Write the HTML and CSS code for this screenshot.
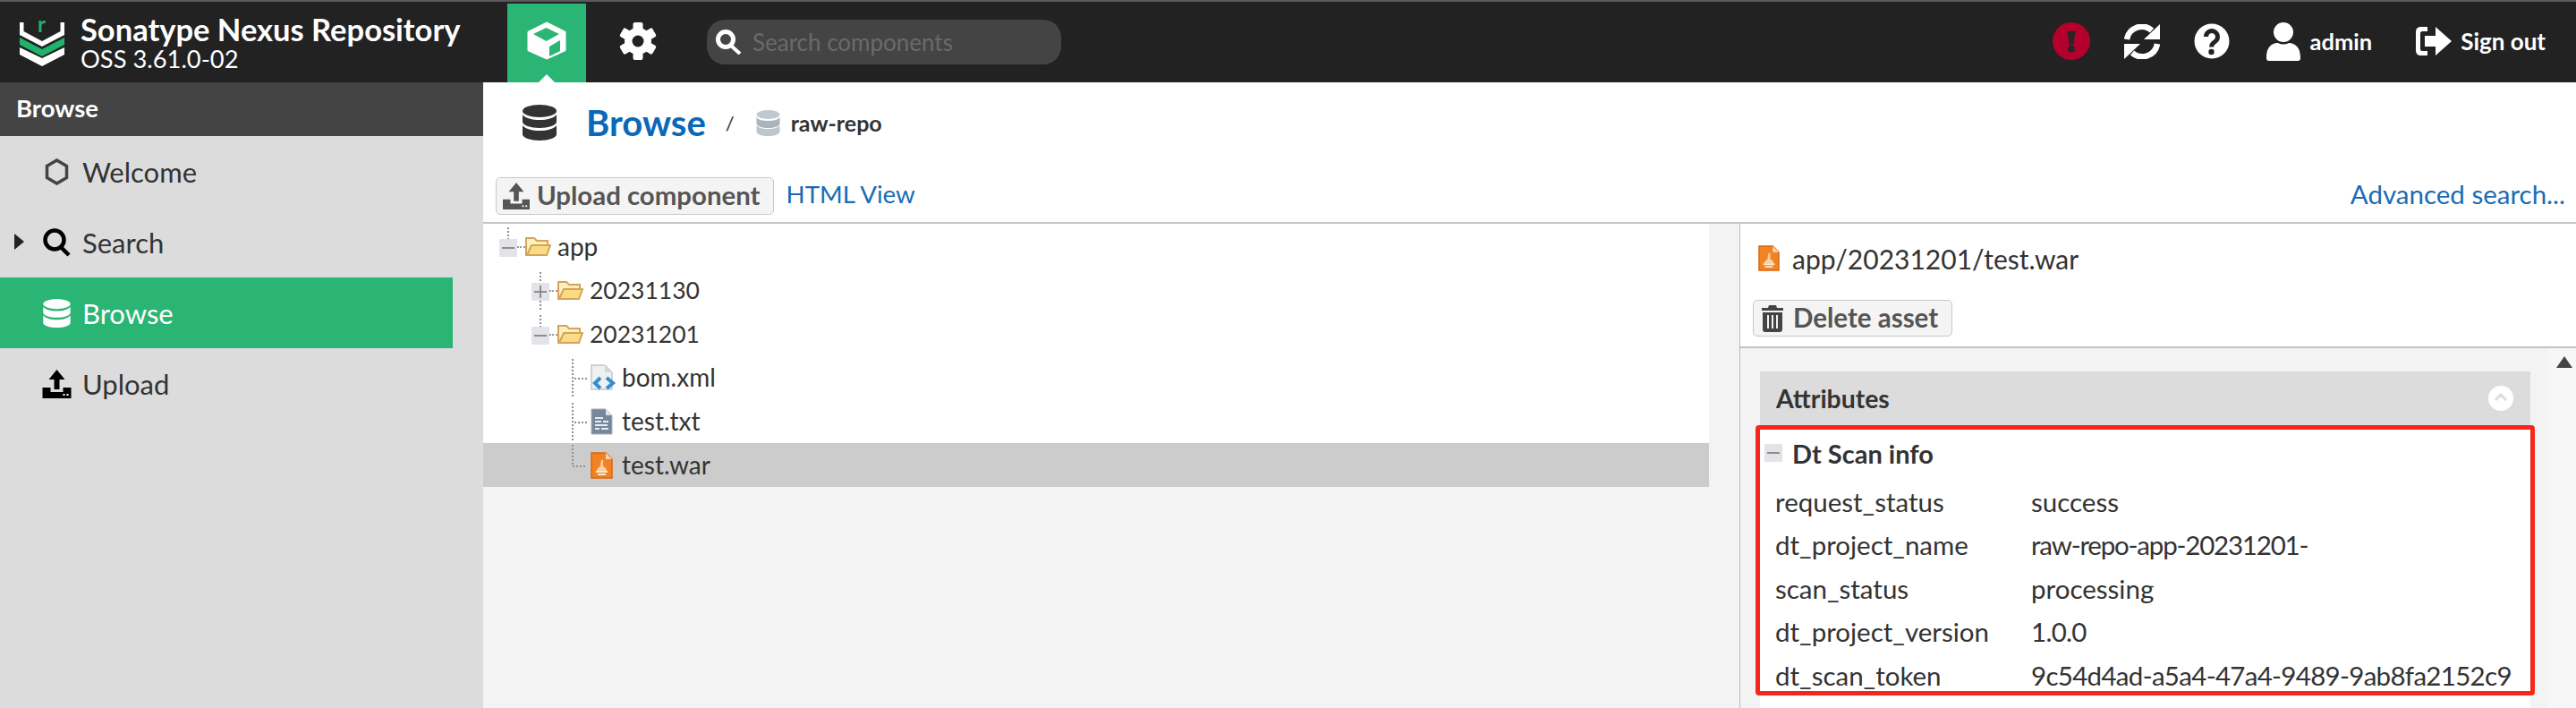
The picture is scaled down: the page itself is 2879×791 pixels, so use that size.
FILE: index.html
```html
<!DOCTYPE html>
<html lang="en">
<head>
  <meta charset="UTF-8" />
  <title>Browse - Nexus Repository Manager</title>
  <link rel="stylesheet" href="styles.css">
</head>
<body>
  <svg class="defs" width="0" height="0">
    <defs>
      <symbol id="db" viewBox="0 0 38 40">
        <ellipse cx="19" cy="7" rx="19" ry="7"/>
        <path d="M0 11c3 4 11 6 19 6s16-2 19-6v8c0 4-9 7-19 7S0 23 0 19z"/>
        <path d="M0 23c3 4 11 6 19 6s16-2 19-6v10c0 4-9 7-19 7S0 37 0 33z"/>
      </symbol>
      <symbol id="upload" viewBox="0 0 32 32">
        <path d="M16 0l9 11h-6v11h-6V11H7z"/>
        <path d="M0 20h9v5h14v-5h9v12H0z"/>
        <rect x="23" y="27" width="2" height="2" fill="#fff"/>
        <rect x="27" y="27" width="2" height="2" fill="#fff"/>
      </symbol>
      <symbol id="folder" viewBox="0 0 29 24">
        <path d="M1 22V3h9l3 3h12v5H8L2 22z" fill="#fdf0bd" stroke="#d6a35a" stroke-width="2"/>
        <path d="M2 22l5-11h21l-4 11z" fill="#fadc85" stroke="#d6a35a" stroke-width="2"/>
      </symbol>
      <symbol id="war" viewBox="0 0 25 30">
        <path d="M1 1h16l7 7v21H1z" fill="#f28322" stroke="#d9670f" stroke-width="1.500"/>
        <path d="M17 1v7h7z" fill="#fbd5ad"/>
        <path d="M12 9h2v7c2 1 4 2 4 5H7c0-3 3-3 4-6z" fill="#fbcfa3"/>
        <path d="M6 21h13v2H6zM8 24h9v2H8z" fill="#fde6cf"/>
      </symbol>
      <symbol id="minus" viewBox="0 0 20 20">
        <rect width="20" height="20" fill="#e2e4e8"/>
        <rect x="3" y="9" width="14" height="2" fill="#8b8d91"/>
      </symbol>
    </defs>
  </svg>

  <header class="topbar">
    <div class="brand">
      <svg class="logo" width="50" height="66" viewBox="0 -16 50 66">
        <path d="M0 1h4.500v10L25 22l20.500-11V1H50v14L25 28 0 15z" fill="#fff"/>
        <path d="M0 18l25 13 25-13v8L25 39 0 26z" fill="#1fb36b"/>
        <path d="M0 29l25 12 25-12v8L25 50 0 37z" fill="#fff"/>
        <text x="20" y="12" class="logo-r">r</text>
      </svg>
      <div class="brand-text">
        <div class="brand-name">Sonatype Nexus Repository</div>
        <div class="brand-version">OSS 3.61.0-02</div>
      </div>
    </div>
    <nav class="modes">
      <div class="mode mode-active">
        <svg width="44" height="43" viewBox="0 0 44 43">
          <path d="M22 2l20 10v20L22 41 2 32V12z" fill="#fff" stroke="#fff" stroke-width="3" stroke-linejoin="round"/>
          <path d="M21.500 7L36 14l-14.500 8L7 14z" fill="#2ab574"/>
          <path d="M25 28l12-7v12l-12 6z" fill="#2ab574"/>
        </svg>
      </div>
      <div class="mode">
        <svg width="42" height="42" viewBox="0 0 42 42">
          <g fill="#fff">
            <rect x="15.500" y="0" width="11" height="42" rx="2"/>
            <rect x="15.500" y="0" width="11" height="42" rx="2" transform="rotate(60 21 21)"/>
            <rect x="15.500" y="0" width="11" height="42" rx="2" transform="rotate(120 21 21)"/>
            <circle cx="21" cy="21" r="15"/>
          </g>
          <circle cx="21" cy="21" r="6.500" fill="#222"/>
        </svg>
      </div>
    </nav>
    <div class="search">
      <svg width="29" height="28" viewBox="0 0 29 28" fill="none" stroke="#fff">
        <circle cx="11" cy="11" r="8.500" stroke-width="5"/>
        <path d="M17 18l10 9" stroke-width="4"/>
      </svg>
      <span class="search-hint">Search components</span>
    </div>
    <div class="actions">
      <span class="action action-alert">
        <svg width="42" height="42" viewBox="0 0 42 42">
          <circle cx="21" cy="21" r="21" fill="#b4002c"/>
          <path d="M16.500 10h9L23.500 25h-5z" fill="#2b2326"/>
          <circle cx="21" cy="29.500" r="4" fill="#2b2326"/>
        </svg>
      </span>
      <span class="action action-refresh">
        <svg width="40" height="39" viewBox="0 0 40 39">
          <path d="M3 17A17 17 0 0 1 31 7M37 22A17 17 0 0 1 9 32" fill="none" stroke="#fff" stroke-width="6.500"/>
          <path d="M40 0v17H22zM0 39V22h18z" fill="#fff"/>
        </svg>
      </span>
      <span class="action action-help">
        <svg width="40" height="40" viewBox="0 0 40 40">
          <circle cx="20" cy="20" r="19.500" fill="#fff"/>
          <path d="M13.500 15a6.500 6.500 0 1 1 10 5.500c-3 2-4 3-4 6" fill="none" stroke="#222" stroke-width="5"/>
          <circle cx="19.500" cy="32" r="3.200" fill="#222"/>
        </svg>
      </span>
      <span class="action action-user">
        <svg width="38" height="43" viewBox="0 0 38 43" fill="#fff">
          <circle cx="19" cy="11" r="11"/>
          <path d="M0 39c0-11 6-16 13-16 4 2 8 2 12 0 7 0 13 5 13 16v1q0 3-3 3H3q-3 0-3-3z"/>
        </svg>
        <span>admin</span>
      </span>
      <span class="action action-signout">
        <svg width="40" height="32" viewBox="0 0 40 32" fill="#fff">
          <path d="M13 0H6C2 0 0 2 0 6v20c0 4 2 6 6 6h7v-5H7c-1 0-2-1-2-2V7c0-1 1-2 2-2h6z"/>
          <path d="M10 10h12V0l18 16-18 16V22H10z"/>
        </svg>
        <span>Sign out</span>
      </span>
    </div>
  </header>

  <div class="main">
    <aside class="side">
      <div class="side-title">Browse</div>
      <div class="side-item">
        <svg class="side-icon" width="28" height="30" viewBox="0 0 28 30" fill="none" stroke="#444" stroke-width="3.500">
          <path d="M14 2l11 6.500v13L14 28 3 21.500v-13z"/>
        </svg>
        <span>Welcome</span>
      </div>
      <div class="side-item">
        <span class="caret"></span>
        <svg class="side-icon" width="33" height="32" viewBox="0 0 33 32" fill="none" stroke="#000" stroke-width="4.500">
          <circle cx="14" cy="13" r="10.500"/>
          <path d="M21 21l9 9"/>
        </svg>
        <span>Search</span>
      </div>
      <div class="side-item side-active">
        <svg class="side-icon" width="30" height="32" fill="#fff"><use href="#db"/></svg>
        <span>Browse</span>
      </div>
      <div class="side-item">
        <svg class="side-icon" width="32" height="32" fill="#000"><use href="#upload"/></svg>
        <span>Upload</span>
      </div>
    </aside>

    <section class="content">
      <div class="crumbs">
        <svg class="crumb-db" width="38" height="40" fill="#333"><use href="#db"/></svg>
        <h1 class="crumb-title">Browse</h1>
        <span class="crumb-sep">/</span>
        <svg class="crumb-repo" width="27" height="29" viewBox="0 0 27 29">
          <ellipse cx="13.500" cy="5" rx="13" ry="5" fill="#c0c9cf"/>
          <path d="M.5 8c2 3 7 4 13 4s11-1 13-4v7c0 3-6 5-13 5S.5 18 .5 15z" fill="#a9b5bd"/>
          <path d="M.5 17c2 3 7 4 13 4s11-1 13-4v7c0 3-6 5-13 5S.5 27 .5 24z" fill="#bcc6cd"/>
        </svg>
        <span class="crumb-repo-name">raw-repo</span>
      </div>
      <div class="toolbar">
        <button class="btn">
          <svg width="30" height="30" fill="#555"><use href="#upload"/></svg>
          Upload component
        </button>
        <a class="link link-html">HTML View</a>
        <a class="link link-right">Advanced search...</a>
      </div>

      <div class="split">
        <div class="tree">
          <div class="tree-rows">
            <div class="row level0">
              <svg class="conn" width="20" height="49" viewBox="0 0 20 49">
                <path d="M10 4v13" class="dots"/>
                <use href="#minus" width="20" height="20" y="17"/>
              </svg>
              <span class="stub"></span>
              <svg width="29" height="24"><use href="#folder"/></svg>
              <span class="row-text">app</span>
            </div>
            <div class="row level1">
              <svg class="conn" width="20" height="49" viewBox="0 0 20 49">
                <path d="M10 5v43" class="dots"/>
                <rect y="17" width="20" height="20" fill="#e2e4e8"/>
                <path d="M3 27h14M10 20v14" stroke="#8b8d91" stroke-width="2"/>
              </svg>
              <span class="stub"></span>
              <svg width="29" height="24"><use href="#folder"/></svg>
              <span class="row-text row-num">20231130</span>
            </div>
            <div class="row level1">
              <svg class="conn" width="20" height="49" viewBox="0 0 20 49">
                <path d="M10 4v13" class="dots"/>
                <use href="#minus" width="20" height="20" y="17"/>
              </svg>
              <span class="stub"></span>
              <svg width="29" height="24"><use href="#folder"/></svg>
              <span class="row-text row-num">20231201</span>
            </div>
            <div class="row level2">
              <svg class="conn" width="30" height="49" viewBox="0 0 30 49">
                <path d="M10 4v43M12 26h14" class="dots"/>
              </svg>
              <svg width="29" height="30" viewBox="0 0 29 30">
                <path d="M1 1h15l8 8v19H1z" fill="#eef0f1" stroke="#c4c7c9" stroke-width="1.500"/>
                <path d="M16 1v8h8z" fill="#d5d8da"/>
                <path d="M11 15l-6 6 6 6M18 15l7 6-7 6" fill="none" stroke="#2f8fd0" stroke-width="4"/>
              </svg>
              <span class="row-text row-text-leaf">bom.xml</span>
            </div>
            <div class="row level2">
              <svg class="conn" width="30" height="49" viewBox="0 0 30 49">
                <path d="M10 4v43M12 26h14" class="dots"/>
              </svg>
              <svg width="25" height="30" viewBox="0 0 25 30">
                <path d="M1 1h16l7 7v21H1z" fill="#76889c" stroke="#a8b3bf"/>
                <path d="M17 1v7h7z" fill="#dfe4ea"/>
                <path d="M5 10h9v2H5zM5 14h7v2H5zM14 14h6v2h-6zM5 18h14v2H5zM5 22h5v2H5zM12 22h8v2h-8z" fill="#e8ecf0"/>
              </svg>
              <span class="row-text">test.txt</span>
            </div>
            <div class="row level2 row-selected">
              <svg class="conn" width="30" height="49" viewBox="0 0 30 49">
                <path d="M10 2v24h16" class="dots"/>
              </svg>
              <svg width="25" height="30"><use href="#war"/></svg>
              <span class="row-text">test.war</span>
            </div>
          </div>
        </div>

        <div class="detail">
          <div class="asset-head">
            <div class="asset-title">
              <svg width="24" height="29"><use href="#war"/></svg>
              <span>app/20231201/test.war</span>
            </div>
            <button class="btn btn-delete">
              <svg width="26" height="30" viewBox="0 0 26 30" fill="#444">
                <path d="M9 0h8l1 3h7v3H1V3h7z"/>
                <path fill-rule="evenodd" d="M2 8h22v19c0 2-1 3-3 3H5c-2 0-3-1-3-3zM7 11v15h2V11zM12 11v15h2V11zM17 11v15h2V11z"/>
              </svg>
              Delete asset
            </button>
          </div>
          <div class="asset-body">
            <div class="panel-wrap">
              <div class="panel">
                <div class="panel-head">
                  <span>Attributes</span>
                  <svg width="28" height="28" viewBox="0 0 28 28">
                    <circle cx="14" cy="14" r="14" fill="#fff"/>
                    <path d="M8 16l6-6 6 6" fill="none" stroke="#dcdcdc" stroke-width="3"/>
                  </svg>
                </div>
                <div class="scan-box">
                  <div class="scan-title">
                    <svg width="20" height="20"><use href="#minus"/></svg>
                    <span>Dt Scan info</span>
                  </div>
                  <div class="kv"><span>request_status</span><span>success</span></div>
                  <div class="kv"><span>dt_project_name</span><span class="kv-name">raw-repo-app-20231201-</span></div>
                  <div class="kv"><span>scan_status</span><span>processing</span></div>
                  <div class="kv"><span>dt_project_version</span><span class="kv-num">1.0.0</span></div>
                  <div class="kv"><span>dt_scan_token</span><span class="kv-num">9c54d4ad-a5a4-47a4-9489-9ab8fa2152c9</span></div>
                </div>
              </div>
            </div>
            <div class="scroll-strip"><span class="scroll-up"></span></div>
          </div>
        </div>
      </div>
    </section>
  </div>
</body>
</html>
```

FILE: styles.css
```css
* {
  box-sizing: border-box;
}
html, body {
  height: 100%;
}
body {
  margin: 0;
  font-family: "Lato", "Open Sans", sans-serif;
  color: #333;
  background: #fff;
  overflow: hidden;
}
.defs {
  display: block;
  height: 0;
}
svg {
  display: block;
  flex: none;
}
.dots {
  fill: none;
  stroke: #8f8f8f;
  stroke-width: 2;
  stroke-dasharray: 2 2;
}

/* top bar */
.topbar {
  height: 92px;
  background: #222;
  border-top: 2px solid #5a5a5e;
  display: flex;
  align-items: center;
  color: #fff;
}
.brand {
  width: 567px;
  padding-left: 22px;
  display: flex;
  align-items: center;
  gap: 18px;
}
.logo {
  margin-top: -12px;
}
.logo-r {
  font-size: 24px;
  font-weight: 700;
  fill: #1fb36b;
}
.brand-name {
  font-size: 34.500px;
  font-weight: 700;
  line-height: 38px;
}
.brand-version {
  font-size: 27.300px;
  line-height: 28px;
}
.modes {
  display: flex;
  align-self: stretch;
  padding-top: 2px;
}
.mode {
  width: 88px;
  padding-bottom: 5px;
  display: flex;
  align-items: center;
  justify-content: center;
  position: relative;
}
.mode + .mode {
  width: 116px;
}
.mode-active {
  background: #2ab574;
}
.mode-active::after {
  content: "";
  position: absolute;
  left: 35px;
  bottom: 0;
  border: 9px solid transparent;
  border-top: 0;
  border-bottom-color: #fff;
}
.search {
  width: 396px;
  height: 50px;
  margin-left: 19px;
  background: #444;
  border-radius: 20px;
  display: flex;
  align-items: center;
  gap: 12px;
  padding-left: 10px;
}
.search-hint {
  font-size: 26px;
  color: #6a6a6a;
}
.actions {
  margin-left: auto;
  padding-bottom: 2px;
  display: flex;
  align-items: center;
}
.action {
  display: flex;
  align-items: center;
  font-weight: 700;
}
.action-alert {
  margin-right: 38px;
}
.action-refresh {
  margin-right: 38px;
}
.action-help {
  margin-right: 41px;
}
.action-user {
  gap: 11px;
  margin-right: 49px;
  font-size: 25.500px;
}
.action-signout {
  gap: 10px;
  margin-right: 34px;
  font-size: 26px;
}

/* left nav */
.main {
  height: 699px;
  display: flex;
}
.side {
  width: 540px;
  background: #dcdcdc;
  padding-right: 34px;
  position: relative;
}
.side-title {
  height: 60px;
  margin-right: -34px;
  padding-left: 18px;
  background: #444;
  color: #fff;
  font-size: 27.500px;
  font-weight: 700;
  line-height: 58px;
}
.side-item {
  height: 79px;
  display: flex;
  align-items: center;
  padding-left: 47px;
  gap: 12px;
  font-size: 31px;
  color: #333;
  position: relative;
}
.side-icon {
  width: 33px;
}
.side-active {
  background: #2ab574;
  color: #fff;
}
.caret {
  position: absolute;
  left: 16px;
  top: 30px;
  border: 9px solid transparent;
  border-left: 11px solid #222;
  border-right: 0;
}

/* content */
.content {
  flex: 1;
  display: flex;
  flex-direction: column;
  min-width: 0;
}
.crumbs {
  height: 96px;
  padding: 0 0 6px 44px;
  display: flex;
  align-items: center;
}
.crumb-title {
  margin: 0 0 0 33px;
  font-size: 40px;
  font-weight: 700;
  color: #0a68b8;
}
.crumb-sep {
  margin: 0 24px 0 22px;
  font-size: 22px;
}
.crumb-repo-name {
  margin-left: 12px;
  font-size: 25px;
  font-weight: 700;
}
.toolbar {
  height: 62px;
  padding: 10px 12px 0 14px;
  display: flex;
  align-items: flex-start;
  border-bottom: 2px solid #c4c4c4;
}
.btn {
  height: 42px;
  padding: 0 14px 3px 7px;
  display: flex;
  align-items: center;
  gap: 8px;
  background: #f4f4f4;
  border: 1px solid #c8c8c8;
  border-radius: 5px;
  font: 700 29.400px "Lato", "Open Sans", sans-serif;
  color: #555;
}
.btn svg {
  margin-top: 3px;
}
.link {
  margin-left: 14px;
  font-size: 29.500px;
  line-height: 38px;
  color: #1a6cb4;
}
.link-html {
  font-size: 27.700px;
}
.link-right {
  margin-left: auto;
}

/* tree and details */
.split {
  flex: 1;
  display: flex;
  min-height: 0;
}
.tree {
  width: 1405px;
  background: #f3f3f3;
  border-right: 1px solid #bdbdbd;
}
.tree-rows {
  width: 1370px;
  background: #fff;
}
.row {
  height: 49px;
  display: flex;
  align-items: center;
  font-size: 28px;
}
.level0 {
  padding-left: 18px;
}
.level1 {
  padding-left: 54px;
}
.level2 {
  padding-left: 90px;
}
.stub {
  width: 9px;
  height: 0;
  border-top: 2px dotted #9a9a9a;
  margin-top: 3px;
}
.row-text {
  margin-left: 7px;
}
.row-num {
  font-size: 26.500px;
}
.level2 .row-text {
  margin-left: 10px;
  margin-top: -2px;
}
.level2 .row-text-leaf {
  margin-left: 6px;
}
.row-selected {
  background: #ccc;
}
.conn {
  align-self: flex-start;
}
.detail {
  flex: 1;
  display: flex;
  flex-direction: column;
  min-width: 0;
}
.asset-head {
  height: 139px;
  padding: 24px 0 0 14px;
  border-bottom: 2px solid #c4c4c4;
}
.asset-title {
  display: flex;
  align-items: center;
  gap: 14px;
  padding-left: 6px;
  font-size: 30px;
  height: 29px;
}
.btn-delete {
  margin-top: 32px;
  padding: 0 15px 3px 8px;
  gap: 10px;
  font-size: 29.500px;
  height: 41px;
}
.asset-body {
  flex: 1;
  background: #f3f3f3;
  display: flex;
}
.panel-wrap {
  flex: 1;
  padding: 26px 20px 0 22px;
}
.panel {
  height: 100%;
  background: #fff;
}
.panel-head {
  height: 60px;
  background: #dcdcdc;
  padding: 0 19px 0 18px;
  display: flex;
  align-items: center;
  justify-content: space-between;
  font-size: 28.400px;
  font-weight: 700;
}
.scan-box {
  margin: 0 -5px;
  height: 302px;
  background: #fff;
  border: 5px solid #f5261c;
  border-radius: 4px;
  padding: 0 0 0 5px;
}
.scan-title {
  height: 52px;
  margin-bottom: 13px;
  display: flex;
  align-items: center;
  gap: 11px;
  font-size: 29px;
  font-weight: 700;
}
.kv {
  height: 30px;
  margin-bottom: 18.500px;
  display: flex;
  align-items: center;
  padding-left: 12px;
  font-size: 29.500px;
  white-space: nowrap;
}
.kv:last-child {
  margin-bottom: 0;
}
.kv span:first-child {
  width: 286px;
}
.kv-name {
  letter-spacing: -1.200px;
}
.kv-num {
  letter-spacing: -.700px;
}
.scroll-strip {
  width: 31px;
  background: #f6f6f6;
  padding: 9px 0 0 9px;
}
.scroll-up {
  display: block;
  width: 0;
  border: 9px solid transparent;
  border-top: 0;
  border-bottom: 13px solid #444;
}
```
